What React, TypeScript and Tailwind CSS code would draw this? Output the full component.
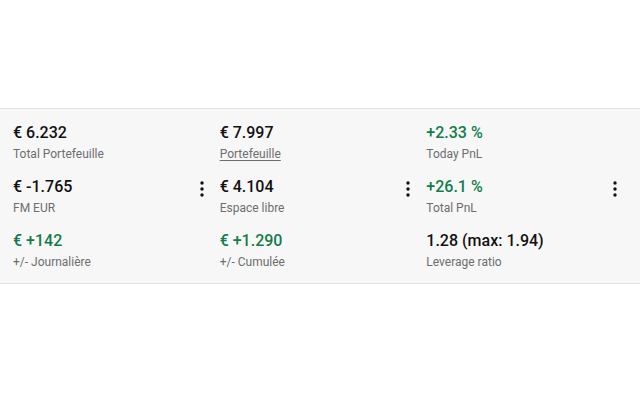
type Stat = {
  value: string;
  label: string;
  positive?: boolean;
  link?: boolean;
  menu?: boolean;
};

const columns: Stat[][] = [
  [
    { value: "€ 6.232", label: "Total Portefeuille" },
    { value: "€ -1.765", label: "FM EUR", menu: true },
    { value: "€ +142", label: "+/- Journalière", positive: true },
  ],
  [
    { value: "€ 7.997", label: "Portefeuille", link: true },
    { value: "€ 4.104", label: "Espace libre", menu: true },
    { value: "€ +1.290", label: "+/- Cumulée", positive: true },
  ],
  [
    { value: "+2.33 %", label: "Today PnL", positive: true },
    { value: "+26.1 %", label: "Total PnL", positive: true, menu: true },
    { value: "1.28 (max: 1.94)", label: "Leverage ratio" },
  ],
];

function KebabIcon() {
  return (
    <svg width="24" height="24" viewBox="0 0 24 24" className="fill-[#111]">
      <circle cx="12" cy="6" r="1.7" />
      <circle cx="12" cy="12" r="1.7" />
      <circle cx="12" cy="18" r="1.7" />
    </svg>
  );
}

function StatCell({ stat }: { stat: Stat }) {
  return (
    <div className="flex items-start justify-between pr-[6px]">
      <div className="flex flex-col">
        <span
          className={`text-[16px] leading-[24px] font-medium ${
            stat.positive ? "text-[#137c4a]" : "text-[#111]"
          }`}
        >
          {stat.value}
        </span>
        <span
          className={`text-[12px] leading-[19px] text-[#6e6e6e] ${
            stat.link ? "underline underline-offset-2" : ""
          }`}
        >
          {stat.label}
        </span>
      </div>
      {stat.menu && (
        <div className="mt-[2px]">
          <KebabIcon />
        </div>
      )}
    </div>
  );
}

export default function App() {
  return (
    <div
      className="flex h-[400px] w-[640px] flex-col bg-white pt-[108px]"
      style={{ fontFamily: "Roboto, 'Liberation Sans', sans-serif" }}
    >
      <div className="grid grid-cols-3 border-y border-[#e2e2e2] bg-[#f7f7f7] pt-3 pb-[11px] pl-[13px] pr-[7px]">
        {columns.map((col, i) => (
          <div key={i} className="flex flex-col gap-y-[11px]">
            {col.map((stat) => (
              <StatCell key={stat.label} stat={stat} />
            ))}
          </div>
        ))}
      </div>
    </div>
  );
}
